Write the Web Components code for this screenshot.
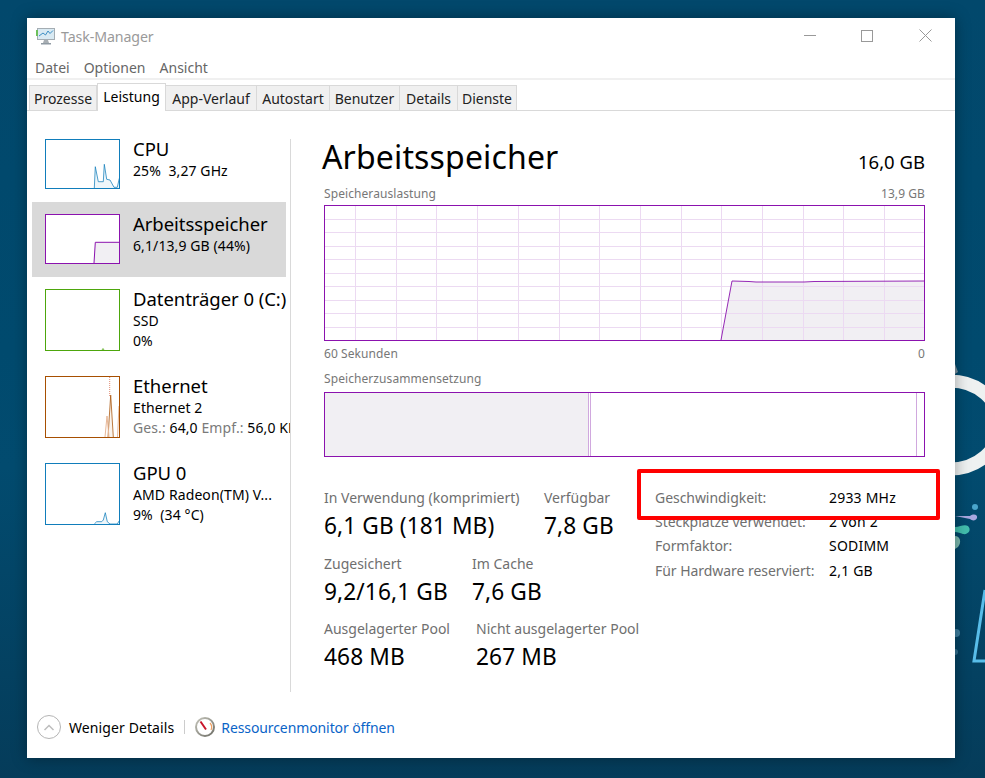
<!DOCTYPE html>
<html lang="de">
<head>
<meta charset="utf-8">
<title>Task-Manager</title>
<style>
    html, body { margin: 0; padding: 0; }
    body { font-family: "Noto Sans", "Open Sans", sans-serif; overflow: hidden; }
</style>
</head>
<body>
<tm-desktop>
    <tm-window>
        <tm-titlebar slot="top" title-text="Task-Manager"></tm-titlebar>
        <tm-menu slot="top"><span>Datei</span><span>Optionen</span><span>Ansicht</span></tm-menu>
        <tm-tabs slot="top">
            <tm-tab w="68">Prozesse</tm-tab>
            <tm-tab w="69" active>Leistung</tm-tab>
            <tm-tab w="91">App-Verlauf</tm-tab>
            <tm-tab w="73">Autostart</tm-tab>
            <tm-tab w="70">Benutzer</tm-tab>
            <tm-tab w="58">Details</tm-tab>
            <tm-tab w="59">Dienste</tm-tab>
        </tm-tabs>

        <tm-sidebar slot="side">
            <tm-side-item heading="CPU" line1="25%&#160;&#160;3,27 GHz" thumb-h="50" color="#117dbb" area="49.3,49 50.3,27.7 53.3,42.7 58.3,42.7 59.3,25.3 61.7,40.3 65,41 69,48.3 72.3,48.3 74.3,39.3"></tm-side-item>
            <tm-side-item selected heading="Arbeitsspeicher" line1="6,1/13,9 GB (44%)" thumb-h="50" color="#8b12ae" area-fill="#f1eff3" area="49,49 50.3,28.3 74,28.3"></tm-side-item>
            <tm-side-item heading="Datenträger 0 (C:)" line1="SSD" line2="0%" thumb-h="62" color="#4da60c" area="57,61 58,59.5 59,61"></tm-side-item>
            <tm-side-item heading="Ethernet" line1="Ethernet 2" thumb-h="62" color="#a74f01" area="63,61 65.7,19 68.3,61" dots="64.7,1 64.7,20" ghost="60,61 62,40 64,61 M 72.5,61 74,30">
                <span><span class="dim">Ges.:</span> 64,0 <span class="dim">Empf.:</span> 56,0 KBit/s</span>
            </tm-side-item>
            <tm-side-item heading="GPU 0" line1="AMD Radeon(TM) V..." line2="9%&#160;&#160;(34 °C)" thumb-h="62" color="#117dbb" area="49.3,61 51.7,58.7 56.7,58.7 58.3,57 60.3,49.7 62.3,58.7 65,61 72.3,61 74.3,57.7"></tm-side-item>
        </tm-sidebar>

        <tm-perf slot="main">
            <tm-usage-graph></tm-usage-graph>
            <tm-composition></tm-composition>
            <tm-stats></tm-stats>
        </tm-perf>

        <tm-footer slot="bottom"></tm-footer>
        <tm-callout slot="over"></tm-callout>
    </tm-window>
</tm-desktop>

<script>
function def(name, html, setup) {
    customElements.define(name, class extends HTMLElement {
        constructor() {
            super()
            this.attachShadow({ mode: "open" }).innerHTML = typeof html === "function" ? html(this) : html
        }
        connectedCallback() {
            if (setup) setup(this, this.shadowRoot)
        }
    })
}

def("tm-desktop", `
    <style>
        :host {
            display: block;
            position: relative;
            box-sizing: border-box;
            width: 985px;
            height: 778px;
            padding: 18px 30px 20px 27px;
            overflow: hidden;
            background: linear-gradient(180deg, #02486c 0%, #004a6e 45%, #024b6f 60%, #053c5a 100%);
        }
        svg { position: absolute; left: 0; top: 0; }
    </style>
    <svg width="985" height="778" viewBox="0 0 985 778">
        <ellipse cx="950" cy="425" rx="50" ry="44" fill="none" stroke="#eef1f1" stroke-width="13"/>
        <path d="M955 364 L958 372 L955 374Z" fill="#7d93a0"/>
        <circle cx="975" cy="507" r="3" fill="#4aa5cb"/>
        <path d="M955 516 L970 516 C974 513 978 515 977 518 C976 521 972 521 970 519Z" fill="#a8a8e0"/>
        <path d="M955 527 C960 527 964 524 968 526 C972 530 968 535 963 534 C960 533 958 532 955 532Z" fill="#43bfae"/>
        <path d="M955 536 C960 536 962 542 958 547 L955 549Z" fill="#7dbbb0"/>
        <circle cx="956" cy="633" r="4" fill="#3f7f9f"/>
        <circle cx="955" cy="652" r="3" fill="#33708f"/>
        <path d="M985 590 L974 661 L985 661" fill="none" stroke="#58bde9" stroke-width="3"/>
    </svg>
    <slot></slot>
`)

def("tm-window", `
    <style>
        :host {
            display: flex;
            flex-direction: column;
            position: relative;
            height: 740px;
            background: #fff;
            box-shadow: 0 0 14px rgba(0, 0, 0, .35);
        }
        .body { display: flex; height: 587px; }
        .rule { width: 1px; height: 553px; margin-top: 28px; background: #d9d9d9; flex: none; }
        ::slotted([slot="side"]) { margin: 16px 0 0 5px; }
        ::slotted([slot="main"]) { margin-left: 33px; }
    </style>
    <slot name="top"></slot>
    <div class="body">
        <slot name="side"></slot>
        <div class="rule"></div>
        <slot name="main"></slot>
    </div>
    <slot name="bottom"></slot>
    <slot name="over"></slot>
`)

def("tm-titlebar", el => `
    <style>
        :host { display: flex; align-items: center; height: 38px; padding-left: 9px; }
        .name { margin: -2px 0 0 5px; font-size: 14.2px; color: #9a9a9a; flex: 1; letter-spacing: -.1px; }
        .btn { width: 58.5px; height: 38px; display: flex; align-items: center; justify-content: center; margin-top: -3px; }
        .btn:nth-of-type(3) { margin-left: -1px; }
    </style>
    <svg width="20" height="18" viewBox="0 0 20 18" style="margin-top: -2px">
        <rect x="1.5" y="1.5" width="17" height="11" fill="#d9eaf3" stroke="#a4adb3"/>
        <path d="M3 9 L7 6 L9.5 8 L12 4 L14 6.5 L17 3.5" fill="none" stroke="#3d8fc4"/>
        <rect x="0" y="3" width="2" height="6" fill="#6cc05a"/>
        <path d="M8 13 H12 L13 16 H7Z" fill="#a8aeb3"/>
        <rect x="5" y="16" width="10" height="1.5" fill="#8f9aa3"/>
    </svg>
    <span class="name">${el.getAttribute("title-text")}</span>
    <span class="btn"><svg width="12" height="12"><path d="M0 5.5H12" stroke="#999"/></svg></span>
    <span class="btn"><svg width="12" height="12"><rect x=".5" y=".5" width="11" height="11" fill="none" stroke="#999"/></svg></span>
    <span class="btn"><svg width="13" height="13"><path d="M.5 .5L12.5 12.5M12.5 .5L.5 12.5" stroke="#999"/></svg></span>
`)

def("tm-menu", `
    <style>
        :host {
            display: flex;
            gap: 14px;
            height: 22px;
            align-items: center;
            padding-left: 8px;
            font-size: 14px;
            color: #666;
            border-bottom: 2px solid #f0f0f0;
        }
    </style>
    <slot></slot>
`)

def("tm-tabs", `
    <style>
        :host {
            display: flex;
            box-sizing: border-box;
            height: 31px;
            padding: 3px 0 0 2px;
            border-bottom: 1px solid #d9d9d9;
        }
    </style>
    <slot></slot>
`)

def("tm-tab", el => `
    <style>
        :host {
            display: flex;
            align-items: center;
            justify-content: center;
            box-sizing: border-box;
            width: ${el.getAttribute("w")}px;
            height: 25px;
            margin-top: 2px;
            font-size: 14px;
            color: #222;
            background: #f0f0f0;
            border: 1px solid #d9d9d9;
            border-bottom: 0;
            border-left-width: 0;
        }
        :host(:first-child) { border-left-width: 1px; }
        :host([active]) {
            height: 28px;
            margin-top: 0;
            padding-bottom: 3px;
            color: #000;
            background: #fff;
            border-left-width: 1px;
            position: relative;
            z-index: 1;
        }
    </style>
    <slot></slot>
`)

def("tm-sidebar", `
    <style>
        :host {
            display: flex;
            flex-direction: column;
            width: 258px;
            flex: none;
            overflow: hidden;
        }
    </style>
    <slot></slot>
`)

def("tm-side-item", el => {
    const h = +el.getAttribute("thumb-h")
    const color = el.getAttribute("color")
    const line = (cls, text) => text ? `<div class="${cls}">${text}</div>` : ""
    const ghost = el.getAttribute("ghost")
    const dots = el.getAttribute("dots")
    const areaFill = el.getAttribute("area-fill")
    const ghosts = ghost ? ghost.split(" M ").map(p => `<polyline points="${p}" fill="none" stroke="#e8b898"/>`).join("") : ""
    return `
    <style>
        :host {
            display: flex;
            flex: none;
            box-sizing: border-box;
            width: 270px;
            padding: 12px 0 13px 13px;
            height: ${h + 25}px;
            color: #000;
        }
        :host([selected]) { background: linear-gradient(90deg, #d9d9d9 254px, #fff 254px); }
        svg { flex: none; display: block; }
        .text { margin-left: 13px; white-space: nowrap; }
        .heading { font-size: 18.5px; line-height: 24px; height: 24px; margin-top: -2px; letter-spacing: -.05px; }
        .sub, .after { font-size: 14px; line-height: 20px; letter-spacing: .1px; }
        ::slotted(span) { display: block; font-size: 14px; line-height: 20px; letter-spacing: .1px; }
    </style>
    <svg width="75" height="${h}" viewBox="0 0 75 ${h}">
        <rect width="75" height="${h}" fill="#fff"/>
        <polygon points="${el.getAttribute("area")} 74,${h - 1}" fill="${areaFill || color}" fill-opacity="${areaFill ? 1 : .07}"/>
        <polyline points="${el.getAttribute("area")}" fill="none" stroke="${color}" stroke-opacity="${areaFill ? 1 : .75}"/>
        ${ghosts}
        ${dots ? `<polyline points="${dots}" fill="none" stroke="#e08a70" stroke-dasharray="1 1"/>` : ""}
        <rect x=".5" y=".5" width="74" height="${h - 1}" fill="none" stroke="${color}"/>
    </svg>
    <div class="text">
        ${line("heading", el.getAttribute("heading"))}
        ${line("sub", el.getAttribute("line1"))}
        <slot></slot>
        ${line("after", el.getAttribute("line2"))}
    </div>`
}, (el) => {
    const s = el.querySelector("span")
    if (s) s.querySelectorAll(".dim").forEach(d => d.style.color = "#7a7a7a")
})

def("tm-perf", `
    <style>
        :host { display: flex; flex-direction: column; width: 601px; flex: none; }
        .head { display: flex; justify-content: space-between; align-items: flex-end; height: 70px; box-sizing: border-box; }
        h1 { margin: 0 0 1px -2px; font-size: 32px; font-weight: 400; line-height: 46px; letter-spacing: .15px; color: #000; }
        .total { font-size: 18.5px; line-height: 26px; margin-bottom: 6px; }
    </style>
    <div class="head"><h1>Arbeitsspeicher</h1><span class="total">16,0 GB</span></div>
    <slot></slot>
`)

const caption = `display: flex; justify-content: space-between; font-size: 12px; color: #777; letter-spacing: .08px;`

def("tm-usage-graph", () => {
    const vert = []
    for (let i = 0; i < 14; i++) {
        const x = Math.round(31 + i * 40.7) + .5
        vert.push(`<path d="M${x} 1V135"/>`)
    }
    const horz = []
    for (let i = 1; i < 10; i++) {
        const y = Math.round(i * 13.5) + .5
        horz.push(`<path d="M1 ${y}H600"/>`)
    }
    return `
    <style>
        :host { display: block; }
        .cap { ${caption} height: 24px; align-items: center; }
        svg { display: block; }
    </style>
    <div class="cap"><span>Speicherauslastung</span><span>13,9 GB</span></div>
    <svg width="601" height="136" viewBox="0 0 601 136">
        <polygon points="397,135 408,76 434,77 460,77 490,77 600,76 600,135" fill="#f1eff3"/>
        <g stroke="#ecdaf2" fill="none">${vert.join("")}${horz.join("")}</g>
        <polyline points="397,135 408,76 425,76.5 432,77 460,77 480,77 490,76.5 600,76" fill="none" stroke="#8b12ae" stroke-opacity=".9"/>
        <rect x=".5" y=".5" width="600" height="135" fill="none" stroke="#8b12ae"/>
    </svg>
    <div class="cap"><span>60 Sekunden</span><span>0</span></div>`
})

def("tm-composition", `
    <style>
        :host { display: block; margin-top: 3px; }
        .cap { ${caption} height: 20px; padding-bottom: 4px; align-items: center; }
        .bar { display: flex; box-sizing: border-box; height: 65px; border: 1px solid #8b12ae; }
        .used { width: 263px; background: #f1eff3; }
        .line { width: 3px; box-sizing: border-box; border-left: 1px solid #d0a8de; border-right: 1px solid #d0a8de; }
        .free { flex: 1; }
        .cached { width: 1px; background: #d0a8de; margin-right: 7px; }
    </style>
    <div class="cap"><span>Speicherzusammensetzung</span></div>
    <div class="bar"><div class="used"></div><div class="line"></div><div class="free"></div><div class="cached"></div></div>
`)

def("tm-stat", el => `
    <style>
        :host { display: block; white-space: nowrap; }
        .label { font-size: 14px; line-height: 20px; color: #6f6f6f; letter-spacing: 0; }
        .value { font-size: 22.7px; line-height: 36px; height: 37px; color: #000; letter-spacing: .1px; }
    </style>
    <div class="label">${el.getAttribute("label")}</div>
    <div class="value">${el.getAttribute("value")}</div>
`)

def("tm-stats", `
    <style>
        :host { display: flex; margin-top: 31px; }
        .left { width: 331px; flex: none; display: flex; flex-direction: column; gap: 8px; }
        .row { display: grid; gap: 25px; }
        .row:first-child { margin-bottom: 1px; }
        .facts {
            display: grid;
            grid-template-columns: 174px auto;
            grid-auto-rows: 24.3px;
            align-items: center;
            font-size: 14px;
            margin-top: -3px;
            letter-spacing: .2px;
            height: 98px;
        }
        .facts .k { color: #6f6f6f; white-space: nowrap; letter-spacing: -.05px; }
    </style>
    <div class="left">
        <div class="row" style="grid-template-columns: 195px auto">
            <tm-stat label="In Verwendung (komprimiert)" value="6,1 GB (181 MB)"></tm-stat>
            <tm-stat label="Verfügbar" value="7,8 GB"></tm-stat>
        </div>
        <div class="row" style="grid-template-columns: 123px auto">
            <tm-stat label="Zugesichert" value="9,2/16,1 GB"></tm-stat>
            <tm-stat label="Im Cache" value="7,6 GB"></tm-stat>
        </div>
        <div class="row" style="grid-template-columns: 127px auto">
            <tm-stat label="Ausgelagerter Pool" value="468 MB"></tm-stat>
            <tm-stat label="Nicht ausgelagerter Pool" value="267 MB"></tm-stat>
        </div>
    </div>
    <div class="facts">
        <span class="k">Geschwindigkeit:</span><span>2933 MHz</span>
        <span class="k">Steckplätze verwendet:</span><span>2 von 2</span>
        <span class="k">Formfaktor:</span><span>SODIMM</span>
        <span class="k">Für Hardware reserviert:</span><span>2,1 GB</span>
    </div>
`)

def("tm-footer", `
    <style>
        :host { display: flex; align-items: center; height: 60px; padding: 0 0 2px 9px; box-sizing: border-box; font-size: 14px; }
        .less { margin-left: 7px; color: #000; letter-spacing: .1px; }
        .sep { width: 1px; height: 14px; background: #ccc; margin: 0 10px; }
        a { margin-left: 6px; color: #0a64c8; text-decoration: none; letter-spacing: -.1px; }
    </style>
    <svg width="26" height="26" viewBox="0 0 26 26">
        <circle cx="13" cy="13" r="11.5" fill="#fff" stroke="#b5b5b5"/>
        <path d="M8.5 16 L13 11.5 L17.5 16" fill="none" stroke="#bdbdbd" stroke-width="1.5"/>
    </svg>
    <span class="less">Weniger Details</span>
    <span class="sep"></span>
    <svg width="20" height="20" viewBox="0 0 20 20">
        <defs><linearGradient id="rim" x1="0" y1="0" x2="1" y2="1"><stop offset="0" stop-color="#c4c4ba"/><stop offset="1" stop-color="#6e6e66"/></linearGradient></defs>
        <circle cx="10" cy="10" r="9" fill="#fff" stroke="url(#rim)" stroke-width="2"/>
        <path d="M15 6 A6.5 6.5 0 0 1 16 13" fill="none" stroke="#f0a060" stroke-width="1.2"/>
        <path d="M5.5 4.5 L11 12.5" stroke="#c8142a" stroke-width="2"/>
    </svg>
    <a>Ressourcenmonitor öffnen</a>
`)

def("tm-callout", `
    <style>
        :host {
            position: absolute;
            left: 610px;
            top: 451px;
            box-sizing: border-box;
            width: 303px;
            height: 51px;
            border: 4px solid #ff0000;
            border-radius: 2px;
            pointer-events: none;
        }
    </style>
`)
</script>
</body>
</html>
